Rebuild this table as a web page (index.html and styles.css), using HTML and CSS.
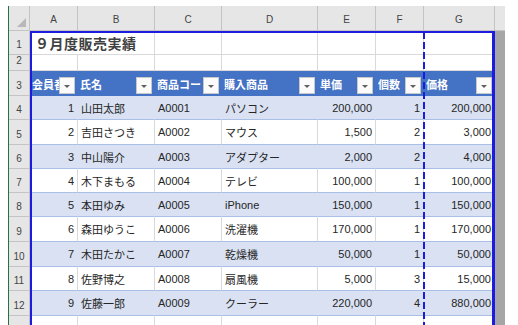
FILE: index.html
```html
<!DOCTYPE html>
<html lang="ja">
<head>
<meta charset="utf-8">
<link rel="stylesheet" href="styles.css">
</head>
<body>
<div class="sheet">
  <div class="corner"></div>
  <div class="ch">A</div><div class="ch">B</div><div class="ch">C</div><div class="ch">D</div><div class="ch">E</div><div class="ch">F</div><div class="ch">G</div><div class="ch end"></div>

  <div class="rh">1</div>
  <div class="c title span2">９月度販売実績</div><div class="c"></div><div class="c"></div><div class="c"></div><div class="c"></div><div class="c"></div><div class="out"></div>

  <div class="rh">2</div>
  <div class="c"></div><div class="c"></div><div class="c"></div><div class="c"></div><div class="c"></div><div class="c"></div><div class="c"></div><div class="out"></div>

  <div class="rh">3</div>
  <div class="th"><span class="lbl">会員番号</span><span class="dd"></span></div>
  <div class="th"><span class="lbl">氏名</span><span class="dd"></span></div>
  <div class="th"><span class="lbl">商品コード</span><span class="dd"></span></div>
  <div class="th"><span class="lbl">購入商品</span><span class="dd"></span></div>
  <div class="th"><span class="lbl">単価</span><span class="dd"></span></div>
  <div class="th"><span class="lbl">個数</span><span class="dd"></span></div>
  <div class="th"><span class="lbl">価格</span><span class="dd"></span></div>
  <div class="out"></div>

  <div class="rh">4</div>
  <div class="d b num">1</div><div class="d b">山田太郎</div><div class="d b">A0001</div><div class="d b">パソコン</div><div class="d b num">200,000</div><div class="d b num">1</div><div class="d b num">200,000</div><div class="out"></div>

  <div class="rh">5</div>
  <div class="d w num">2</div><div class="d w">吉田さつき</div><div class="d w">A0002</div><div class="d w">マウス</div><div class="d w num">1,500</div><div class="d w num">2</div><div class="d w num">3,000</div><div class="out"></div>

  <div class="rh">6</div>
  <div class="d b num">3</div><div class="d b">中山陽介</div><div class="d b">A0003</div><div class="d b">アダプター</div><div class="d b num">2,000</div><div class="d b num">2</div><div class="d b num">4,000</div><div class="out"></div>

  <div class="rh">7</div>
  <div class="d w num">4</div><div class="d w">木下まもる</div><div class="d w">A0004</div><div class="d w">テレビ</div><div class="d w num">100,000</div><div class="d w num">1</div><div class="d w num">100,000</div><div class="out"></div>

  <div class="rh">8</div>
  <div class="d b num">5</div><div class="d b">本田ゆみ</div><div class="d b">A0005</div><div class="d b">iPhone</div><div class="d b num">150,000</div><div class="d b num">1</div><div class="d b num">150,000</div><div class="out"></div>

  <div class="rh">9</div>
  <div class="d w num">6</div><div class="d w">森田ゆうこ</div><div class="d w">A0006</div><div class="d w">洗濯機</div><div class="d w num">170,000</div><div class="d w num">1</div><div class="d w num">170,000</div><div class="out"></div>

  <div class="rh">10</div>
  <div class="d b num">7</div><div class="d b">木田たかこ</div><div class="d b">A0007</div><div class="d b">乾燥機</div><div class="d b num">50,000</div><div class="d b num">1</div><div class="d b num">50,000</div><div class="out"></div>

  <div class="rh">11</div>
  <div class="d w num">8</div><div class="d w">佐野博之</div><div class="d w">A0008</div><div class="d w">扇風機</div><div class="d w num">5,000</div><div class="d w num">3</div><div class="d w num">15,000</div><div class="out"></div>

  <div class="rh">12</div>
  <div class="d b num">9</div><div class="d b">佐藤一郎</div><div class="d b">A0009</div><div class="d b">クーラー</div><div class="d b num">220,000</div><div class="d b num">4</div><div class="d b num">880,000</div><div class="out"></div>

  <div class="rh"></div>
  <div class="c"></div><div class="c"></div><div class="c"></div><div class="c"></div><div class="c"></div><div class="c"></div><div class="c"></div><div class="out"></div>

  <div class="print-area"></div>
  <div class="page-break"></div>
</div>
</body>
</html>
```

FILE: styles.css
```css
html, body {
  margin: 0;
  padding: 0;
  background: #ffffff;
}
body {
  font-family: "Liberation Sans", "Noto Sans CJK JP", sans-serif;
  font-size: 11px;
  color: #262626;
  overflow: hidden;
}
.sheet {
  position: relative;
  display: grid;
  grid-template-columns: 21px 48px 77px 67px 96px 58px 48px 71px 10px;
  grid-template-rows: 25px 24px 16px 25px 24px 25px 24px 24px 24px 25px 25px 24px 25px 12px;
  width: max-content;
  margin: 6px 0 0 8px;
  border-left: 1px solid #217346;
}
.sheet > div {
  box-sizing: border-box;
  min-width: 0;
  overflow: hidden;
  white-space: nowrap;
}
.corner {
  position: relative;
  background: #e6e6e6;
  border-right: 1px solid #c4c4c4;
  border-bottom: 1px solid #c4c4c4;
}
.corner::after {
  content: "";
  position: absolute;
  right: 3px;
  bottom: 3px;
  width: 0;
  height: 0;
  border-left: 9px solid transparent;
  border-bottom: 9px solid #b8b8b8;
}
.ch {
  background: #e6e6e6;
  border-right: 1px solid #c4c4c4;
  border-bottom: 1px solid #c4c4c4;
  display: flex;
  align-items: flex-end;
  justify-content: center;
  padding-bottom: 5px;
  font-size: 10px;
  color: #444;
}
.ch.end {
  border-right: none;
}
.rh {
  background: #e6e6e6;
  border-right: 1px solid #c4c4c4;
  border-bottom: 1px solid #c4c4c4;
  display: flex;
  align-items: flex-end;
  justify-content: center;
  padding-bottom: 4px;
  font-size: 10px;
  color: #444;
}
.c {
  background: #fff;
  border-right: 1px solid #d9d9d9;
  border-bottom: 1px solid #d9d9d9;
}
.title {
  grid-column: span 2;
  display: flex;
  align-items: center;
  padding-left: 5px;
  font-family: "Noto Sans CJK JP", sans-serif;
  font-weight: bold;
  font-size: 14px;
  color: #404040;
  letter-spacing: 0.5px;
}
.out {
  background: #a6a6a6;
}
.th {
  background: #4472c4;
  color: #fff;
  font-weight: bold;
  display: flex;
  align-items: center;
  padding-left: 2px;
  padding-right: 2px;
  border-right: 1px solid #4472c4;
}
.th .lbl {
  flex: 1;
  min-width: 0;
  overflow: hidden;
  white-space: nowrap;
  font-family: "Noto Sans CJK JP", sans-serif;
  font-size: 11px;
}
.dd {
  position: relative;
  flex: none;
  width: 16px;
  height: 17px;
  margin-top: 3px;
  background: #fbfbfb;
  border: 1px solid #c8c8c8;
  box-sizing: border-box;
}
.dd::after {
  content: "";
  position: absolute;
  left: 4px;
  top: 7px;
  border-left: 3.5px solid transparent;
  border-right: 3.5px solid transparent;
  border-top: 3.5px solid #606060;
}
.d {
  display: flex;
  align-items: center;
  padding: 0 3px;
  border-bottom: 1px solid #a9bfe6;
}
.d.b {
  background: #d9e1f2;
  border-right: 1px solid #d9e1f2;
}
.d.w {
  background: #fff;
  border-right: 1px solid #d9d9d9;
}
.num {
  justify-content: flex-end;
}
.print-area {
  position: absolute;
  left: 21px;
  top: 25px;
  width: 465px;
  bottom: -4px;
  border-top: 2px solid #1c1ce0;
  border-left: 2px solid #1c1ce0;
  border-right: 3px solid #1c1ce0;
  box-sizing: border-box;
  pointer-events: none;
}
.page-break {
  position: absolute;
  left: 414px;
  top: 26px;
  width: 2px;
  bottom: 0;
  background: repeating-linear-gradient(to bottom, #1c1ce0 0 7px, transparent 7px 10px);
  pointer-events: none;
}
```
